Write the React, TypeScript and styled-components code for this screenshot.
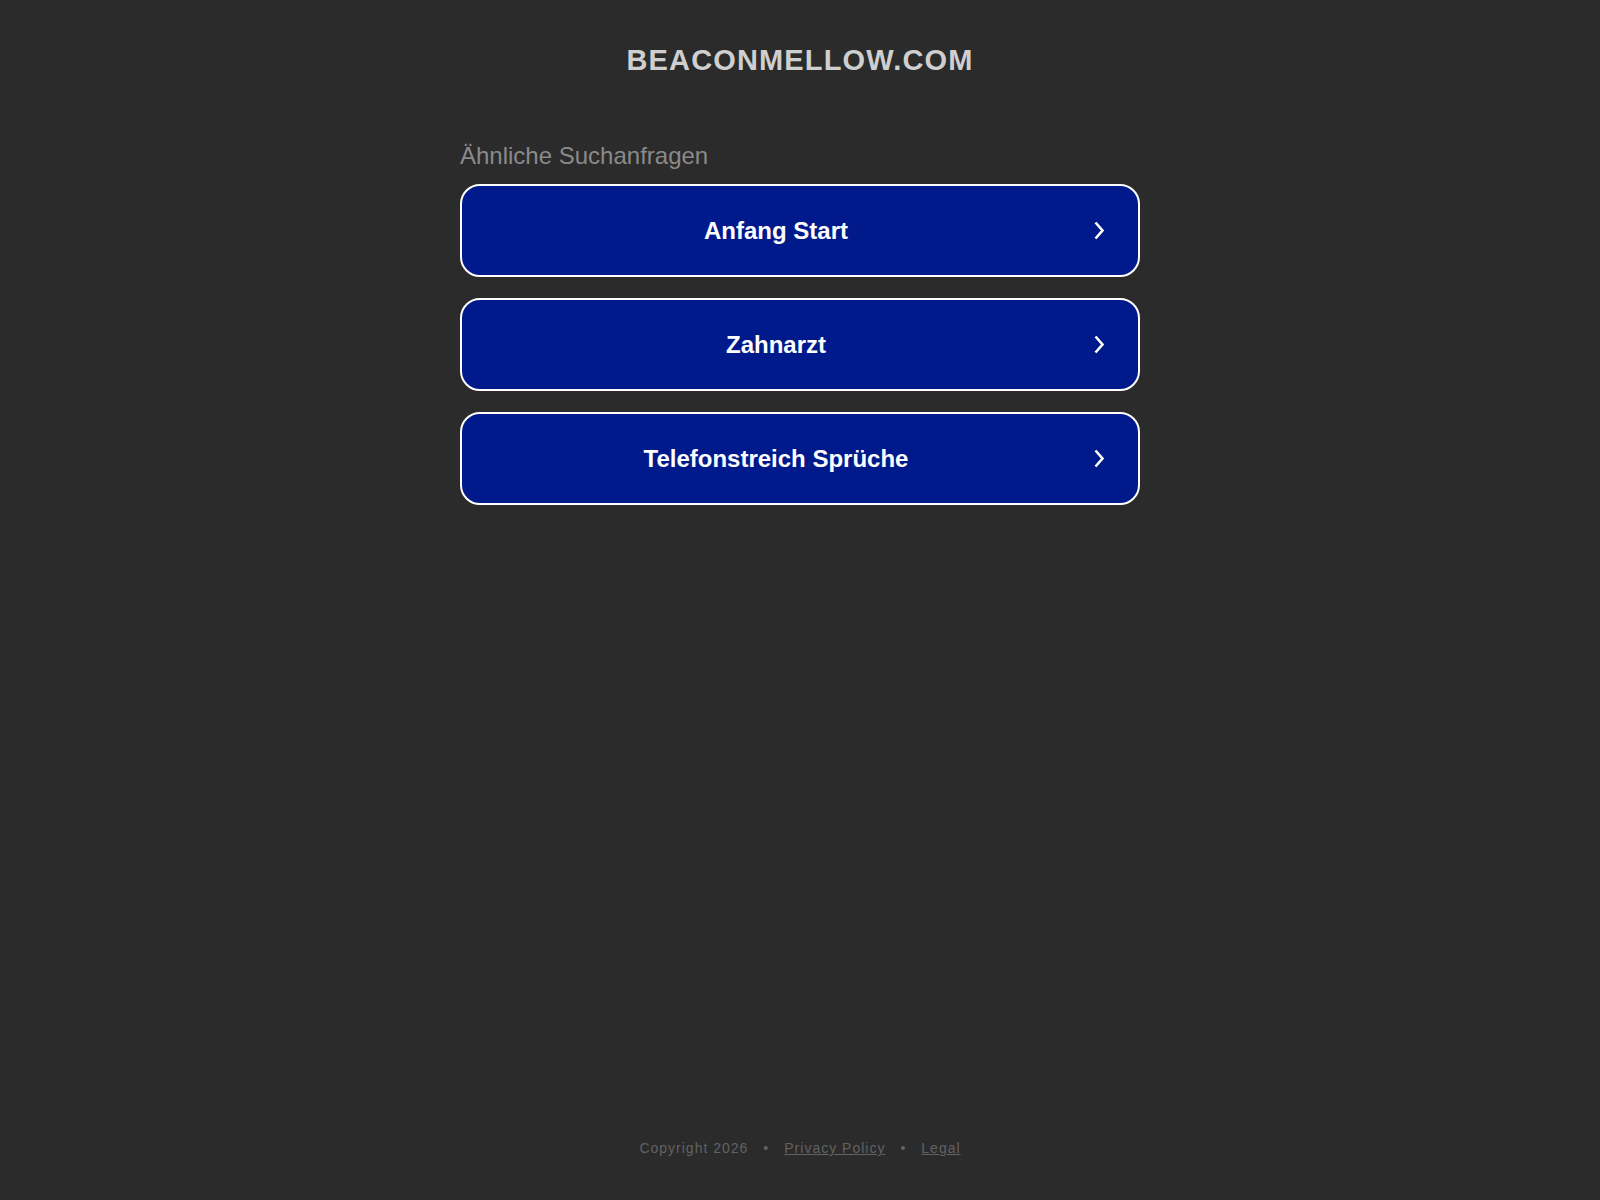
import React from "react";
import styled, { createGlobalStyle } from "styled-components";

const GlobalStyle = createGlobalStyle`
  html, body {
    margin: 0;
    padding: 0;
    background: #2b2b2b;
  }
  body {
    font-family: "Liberation Sans", Arial, sans-serif;
  }
`;

const Page = styled.div`
  min-height: 100vh;
  display: flex;
  flex-direction: column;
  align-items: center;
  box-sizing: border-box;
`;

const Title = styled.h1`
  margin: 44px 0 0;
  font-size: 29px;
  line-height: 33px;
  font-weight: 700;
  letter-spacing: 1.15px;
  color: #cfcfcf;
  text-transform: uppercase;
`;

const Main = styled.main`
  width: 680px;
  margin-top: 65px;
  display: flex;
  flex-direction: column;
`;

const Label = styled.div`
  font-size: 24px;
  line-height: 27px;
  color: #8a8a8a;
  margin-bottom: 15px;
`;

const LinkList = styled.div`
  display: flex;
  flex-direction: column;
  gap: 21px;
`;

const LinkButton = styled.a`
  display: flex;
  align-items: center;
  height: 93px;
  box-sizing: border-box;
  padding: 0 20px;
  border: 2px solid #ffffff;
  border-radius: 20px;
  background: #011a8b;
  color: #ffffff;
  text-decoration: none;
  cursor: pointer;
`;

const LinkText = styled.span`
  flex: 1;
  text-align: center;
  font-size: 24px;
  font-weight: 700;
  padding-left: 2px;
`;

const Arrow = styled.span`
  width: 50px;
  display: flex;
  justify-content: flex-end;
  padding-right: 14px;
  box-sizing: border-box;
`;

const Footer = styled.footer`
  margin-top: auto;
  padding-bottom: 44px;
  font-size: 14px;
  line-height: 16px;
  letter-spacing: 1px;
  color: #626262;
  display: flex;
  gap: 15px;
`;

const FooterLink = styled.a`
  color: #626262;
  text-decoration: underline;
`;

const Chevron = () => (
  <svg width="10" height="19" viewBox="0 0 10 19">
    <polyline
      points="1.5,1.5 8.5,9.5 1.5,17.5"
      fill="none"
      stroke="#ffffff"
      strokeWidth="2.6"
    />
  </svg>
);

const searches = ["Anfang Start", "Zahnarzt", "Telefonstreich Sprüche"];

const App: React.FC = () => {
  return (
    <>
      <GlobalStyle />
      <Page>
        <Title>beaconmellow.com</Title>
        <Main>
          <Label>Ähnliche Suchanfragen</Label>
          <LinkList>
            {searches.map((s) => (
              <LinkButton key={s}>
                <LinkText>{s}</LinkText>
                <Arrow>
                  <Chevron />
                </Arrow>
              </LinkButton>
            ))}
          </LinkList>
        </Main>
        <Footer>
          <span>Copyright 2026</span>
          <span>•</span>
          <FooterLink>Privacy Policy</FooterLink>
          <span>•</span>
          <FooterLink>Legal</FooterLink>
        </Footer>
      </Page>
    </>
  );
};

export default App;
